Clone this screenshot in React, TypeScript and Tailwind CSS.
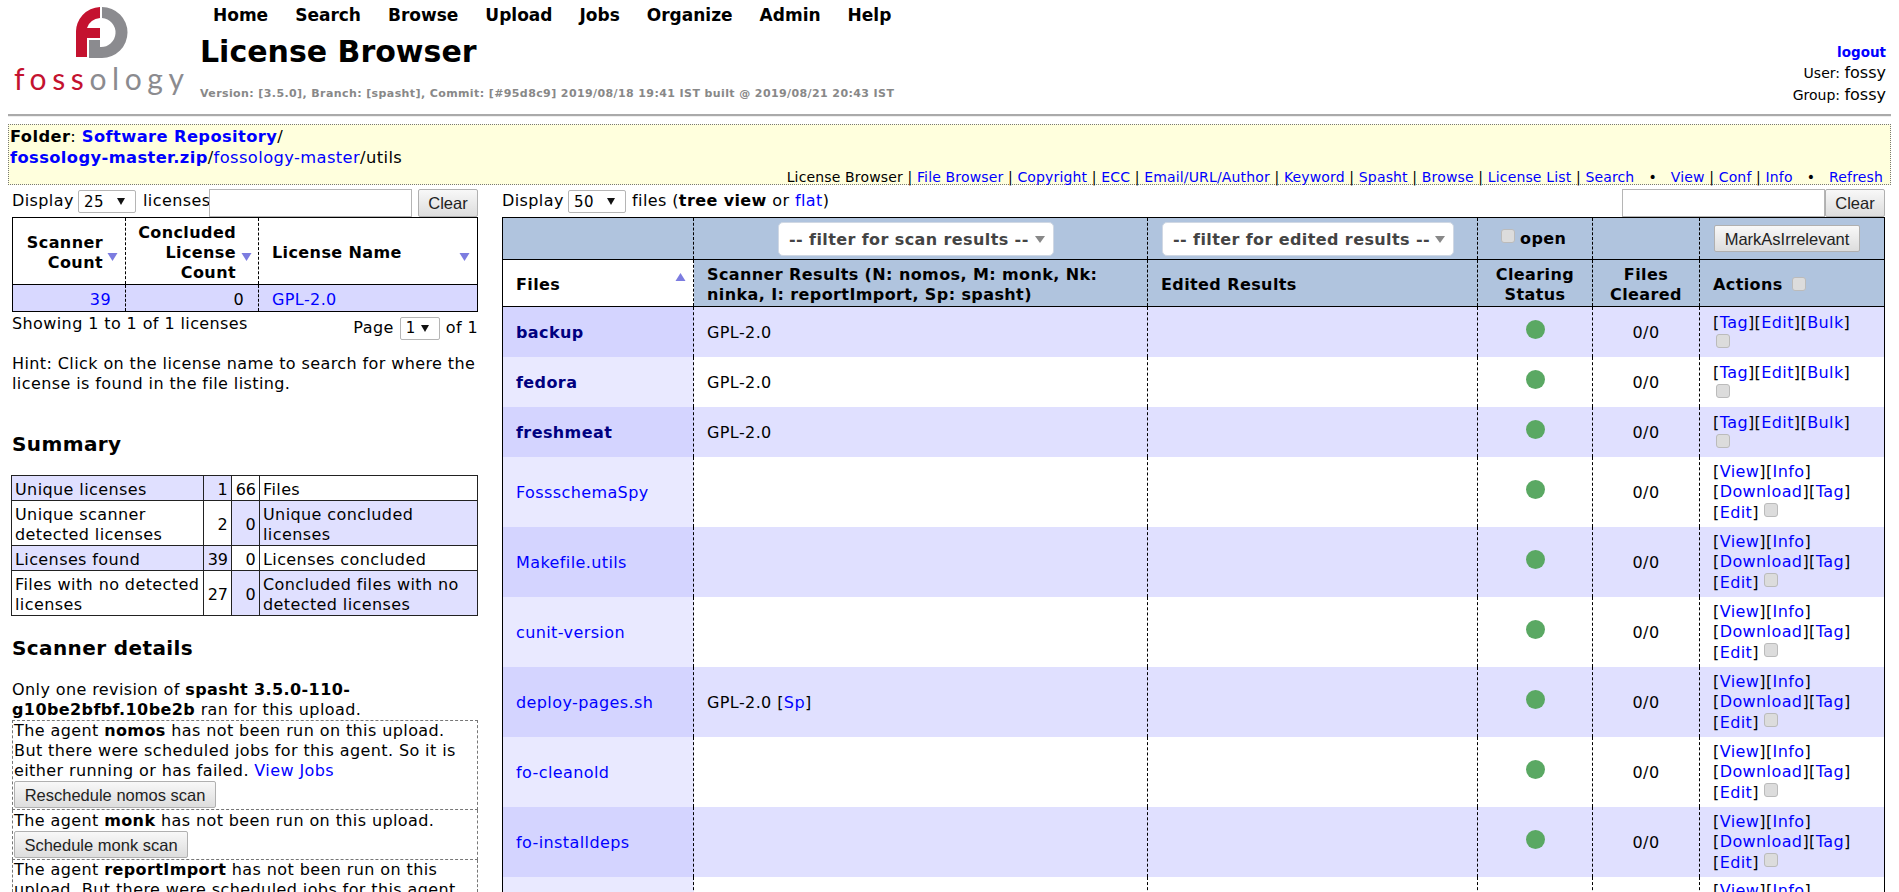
import React from "react";

const Tri = ({ up = false, className = "" }: { up?: boolean; className?: string }) => (
  <svg width="11" height="10" viewBox="0 0 11 10" className={className}>
    <path d={up ? "M5.5 1 L10.5 9 H0.5 Z" : "M0.5 1 H10.5 L5.5 9 Z"} fill="#7c7ce0" />
  </svg>
);

const Check = ({ className = "inline-block" }: { className?: string }) => (
  <input
    type="checkbox"
    className={
      "appearance-none w-[14px] h-[14px] rounded-[3px] border border-[#bbbbbb] bg-[#dcdcdc] " + className
    }
  />
);

const Sel = ({ value, w, h = "h-[23px]" }: { value: string; w: string; h?: string }) => (
  <span className={"relative inline-block " + w + " " + h}>
    <select className={"appearance-none block w-full h-full bg-white border border-[#b5b5b5] rounded-[2px] pl-[5px] text-[15px] text-black font-['DejaVu_Sans',sans-serif]"}>
      <option>{value}</option>
    </select>
    <svg width="8" height="7" viewBox="0 0 8 7" className="absolute right-[11px] top-[8px] pointer-events-none">
      <path d="M0 0 H8 L4 7 Z" fill="#111" />
    </svg>
  </span>
);

const Btn = ({ children, className = "" }: { children: React.ReactNode; className?: string }) => (
  <button
    className={
      "bg-gradient-to-b from-[#f8f8f8] to-[#dddddd] border border-[#b0b0b0] rounded-[2px] font-['Liberation_Sans',sans-serif] tracking-normal text-[16.5px] leading-[18px] text-[#222] " +
      className
    }
  >
    {children}
  </button>
);

const L = ({ children, className = "" }: { children: React.ReactNode; className?: string }) => (
  <a href="#" className={"text-[#0000ff] " + className}>
    {children}
  </a>
);

const Acts = ({ items }: { items: string[] }) => (
  <>
    {items.map((t) => (
      <React.Fragment key={t}>
        [<L>{t}</L>]<wbr />
      </React.Fragment>
    ))}
  </>
);

const Chosen = ({ label, w }: { label: string; w: string }) => (
  <div className={"relative h-[34px] bg-white rounded-[5px] border border-[#d0d8e4] pl-[10px] font-bold text-[#444] leading-[34px] whitespace-nowrap " + w}>
    {label}
    <svg width="10" height="7" viewBox="0 0 10 7" className="absolute right-[8px] top-[13px]">
      <path d="M0 0 H10 L5 7 Z" fill="#888" />
    </svg>
  </div>
);

const Logo = () => (
  <div className="w-[200px] shrink-0 pl-[14px] pt-[7px]">
    <svg width="70" height="52" viewBox="0 0 70 52" className="ml-[62px] block">
      <g transform="translate(-77 -7)">
        <path d="M77 57 V33 A25 25 0 0 1 101 7 V18 A15 15 0 0 0 88 28 H101 V38 H88 V57 Z" fill="#c4122f" />
        <path d="M103 7 A25.5 25.5 0 1 1 103 58 H90 V40 H101 V47 A14.5 14.5 0 0 0 103 18 Z" fill="#8b8b8f" />
      </g>
    </svg>
    <div className="mt-[1px] font-['Lato',sans-serif] text-[30px] leading-[36px] tracking-[5.6px] whitespace-nowrap">
      <span className="text-[#c4122f]">foss</span>
      <span className="text-[#8b8b8f]">ology</span>
    </div>
  </div>
);

type Row = { name: string; dir?: boolean; scan?: string; sp?: boolean };
const rows: Row[] = [
  { name: "backup", dir: true, scan: "GPL-2.0" },
  { name: "fedora", dir: true, scan: "GPL-2.0" },
  { name: "freshmeat", dir: true, scan: "GPL-2.0" },
  { name: "FossschemaSpy" },
  { name: "Makefile.utils" },
  { name: "cunit-version" },
  { name: "deploy-pages.sh", scan: "GPL-2.0", sp: true },
  { name: "fo-cleanold" },
  { name: "fo-installdeps" },
  { name: "fo-postinstall" },
];

const dash = "border-r border-dashed border-black";

export default function App() {
  return (
    <div className="h-[892px] overflow-hidden bg-white text-black text-[16px] tracking-[0.4px] leading-[20px] font-['DejaVu_Sans',sans-serif]">
      <header className="flex h-[114px]">
        <Logo />
        <div className="flex-1">
          <nav className="flex gap-[27px] pl-[13px] pt-[4px] text-[17px] tracking-normal leading-[22px] font-bold">
            {["Home", "Search", "Browse", "Upload", "Jobs", "Organize", "Admin", "Help"].map((n) => (
              <span key={n}>{n}</span>
            ))}
          </nav>
          <h1 className="mt-[8px] text-[30px] tracking-normal leading-[36px] font-bold">License Browser</h1>
          <p className="mt-[17px] text-[11px] tracking-[0.4px] leading-[14px] font-bold text-[#888]">
            Version: [3.5.0], Branch: [spasht], Commit: [#95d8c9] 2019/08/18 19:41 IST built @ 2019/08/21 20:43 IST
          </p>
        </div>
        <div className="pr-[13px] pt-[42px] text-right tracking-normal">
          <div className="font-bold text-[#0000ff] leading-[20px] text-[13.5px]">logout</div>
          <div className="leading-[22px] text-[14px]">
            User: <span className="text-[16px]">fossy</span>
          </div>
          <div className="leading-[22px] text-[14px]">
            Group: <span className="text-[16px]">fossy</span>
          </div>
        </div>
      </header>
      <hr className="mx-[8px] border-0 border-t-2 border-b border-t-[#aaaaaa] border-b-[#eeeeee]" />

      <section className="mx-[8px] mt-[7px] h-[61px] border border-dotted border-[#777] bg-[#ffffdd] pl-[1px] pt-[1px] flex flex-col">
        <div className="leading-[21px] text-[16.3px]">
          <b>Folder</b>: <L className="font-bold">Software Repository</L>/
          <br />
          <L className="font-bold">fossology-master.zip</L>/<L>fossology-master</L>/utils
        </div>
        <div className="mt-auto pr-[7px] text-right text-[14px] tracking-[0.15px] leading-[18px]">
          License Browser | <L>File Browser</L> | <L>Copyright</L> | <L>ECC</L> | <L>Email/URL/Author</L> | <L>Keyword</L> | <L>Spasht</L> | <L>Browse</L> | <L>License List</L> | <L>Search</L>
          <span className="mx-[14px]">•</span>
          <L>View</L> | <L>Conf</L> | <L>Info</L>
          <span className="mx-[14px]">•</span>
          <L>Refresh</L>
        </div>
      </section>

      <main className="flex pt-[4px]">
        <aside className="w-[466px] shrink-0 ml-[12px] mr-[24px]">
          <div className="flex items-start h-[28px] w-[466px]">
            <span className="w-[66px] mt-[2px]">Display</span>
            <span className="mt-[1px] flex"><Sel value="25" w="w-[58px]" /></span>
            <span className="ml-[7px] w-[66px] mt-[2px]">licenses</span>
            <input className="w-[203px] h-[28px] border border-[#b5b5b5] bg-white" />
            <Btn className="ml-[6px] w-[60px] h-[28px]">Clear</Btn>
          </div>

          <table className="w-[466px] table-fixed border-collapse border border-black">
            <colgroup>
              <col className="w-[113px]" />
              <col className="w-[133px]" />
              <col />
            </colgroup>
            <thead>
              <tr className="h-[67px] border-b border-black font-bold">
                <th className={"relative text-right pt-[3px] pr-[22px] " + dash}>
                  Scanner Count
                  <Tri className="absolute right-[7px] top-[34px]" />
                </th>
                <th className={"relative text-right pt-[3px] pr-[22px] " + dash}>
                  Concluded License Count
                  <Tri className="absolute right-[6px] top-[34px]" />
                </th>
                <th className="relative text-left pt-[3px] pl-[13px]">
                  License Name
                  <Tri className="absolute right-[7px] top-[34px]" />
                </th>
              </tr>
            </thead>
            <tbody>
              <tr className="h-[27px] bg-[#d8d8ff]">
                <td className={"text-right pt-[3px] pr-[14px] " + dash}><L>39</L></td>
                <td className={"text-right pt-[3px] pr-[14px] " + dash}>0</td>
                <td className="pt-[3px] pl-[13px]"><L>GPL-2.0</L></td>
              </tr>
            </tbody>
          </table>

          <div className="flex justify-between w-[466px]">
            <span className="leading-[24px]">Showing 1 to 1 of 1 licenses</span>
            <span className="flex items-center mt-[4px] h-[24px]">
              Page<span className="ml-[6px] flex"><Sel value="1" w="w-[40px]" /></span><span className="ml-[6px]">of 1</span>
            </span>
          </div>

          <p className="mt-[14px] w-[466px]">
            Hint: Click on the license name to search for where the license is found in the file listing.
          </p>

          <h2 className="mt-[37px] text-[20px] leading-[26px] font-bold">Summary</h2>

          <table className="-ml-[1px] mt-[18px] w-[467px] table-fixed border-collapse border border-[#222]">
            <colgroup>
              <col className="w-[192px]" />
              <col className="w-[28px]" />
              <col className="w-[28px]" />
              <col />
            </colgroup>
            <tbody className="[&_td]:border [&_td]:border-[#222] [&_td]:px-[3px] [&_td]:pt-[3px]">
              <tr className="h-[25px]">
                <td className="bg-[#e0e0ff]">Unique licenses</td>
                <td className="text-right bg-[#e0e0ff]">1</td>
                <td className="text-right !tracking-normal">66</td>
                <td>Files</td>
              </tr>
              <tr className="h-[45px]">
                <td>Unique scanner detected licenses</td>
                <td className="text-right">2</td>
                <td className="text-right bg-[#e0e0ff]">0</td>
                <td className="bg-[#e0e0ff]">Unique concluded licenses</td>
              </tr>
              <tr className="h-[25px]">
                <td className="bg-[#e0e0ff]">Licenses found</td>
                <td className="text-right !tracking-normal bg-[#e0e0ff]">39</td>
                <td className="text-right">0</td>
                <td>Licenses concluded</td>
              </tr>
              <tr className="h-[45px]">
                <td>Files with no detected licenses</td>
                <td className="text-right !tracking-normal">27</td>
                <td className="text-right bg-[#e0e0ff]">0</td>
                <td className="bg-[#e0e0ff]">Concluded files with no detected licenses</td>
              </tr>
            </tbody>
          </table>

          <h2 className="mt-[19px] text-[20px] leading-[26px] font-bold">Scanner details</h2>

          <p className="mt-[19px] w-[466px]">
            Only one revision of <b>spasht 3.5.0-110-g10be2bfbf.10be2b</b> ran for this upload.
          </p>

          <div className="w-[466px]">
            <div className="border border-dashed border-[#777] pl-[1px] pb-[1px]">
              The agent <b>nomos</b> has not been run on this upload. But there were scheduled jobs for this agent. So it is either running or has failed. <L>View Jobs</L>
              <br />
              <Btn className="w-[202px] h-[27px] block">Reschedule nomos scan</Btn>
            </div>
            <div className="border border-dashed border-t-0 border-[#777] pl-[1px] pb-[1px] pt-[1px]">
              The agent <b>monk</b> has not been run on this upload.
              <br />
              <Btn className="w-[174px] h-[27px] block">Schedule monk scan</Btn>
            </div>
            <div className="border border-dashed border-t-0 border-[#777] pl-[1px]">
              The agent <b>reportImport</b> has not been run on this upload. But there were scheduled jobs for this agent. So it is either running or has failed.
            </div>
          </div>
        </aside>

        <div className="flex-1 min-w-0">
          <div className="flex items-start h-[28px] w-[1383px]">
            <span className="w-[66px] mt-[2px]">Display</span>
            <span className="mt-[1px] flex"><Sel value="50" w="w-[58px]" /></span>
            <span className="ml-[6px] mt-[2px]">
              files (<b>tree view</b> or <L>flat</L>)
            </span>
            <input className="ml-auto w-[203px] h-[28px] border border-[#b5b5b5] bg-white" />
            <Btn className="w-[60px] h-[28px]">Clear</Btn>
          </div>

          <table className="w-[1383px] table-fixed border-collapse border border-black">
            <colgroup>
              <col className="w-[191px]" />
              <col className="w-[454px]" />
              <col className="w-[330px]" />
              <col className="w-[115px]" />
              <col className="w-[107px]" />
              <col />
            </colgroup>
            <thead className="font-bold">
              <tr className="h-[42px] bg-[#b0c4de] border-b border-black">
                <td className={dash}></td>
                <td className={"pl-[84px] " + dash}><Chosen label="-- filter for scan results --" w="w-[276px]" /></td>
                <td className={"pl-[14px] " + dash}><Chosen label="-- filter for edited results --" w="w-[292px]" /></td>
                <td className={"pl-[23px] " + dash}>
                  <span className="flex items-center gap-[5px]"><Check className="inline-block -mt-[5px]" />open</span>
                </td>
                <td className={dash}></td>
                <td className="pl-[14px]">
                  <Btn className="w-[146px] h-[27px] font-normal">MarkAsIrrelevant</Btn>
                </td>
              </tr>
              <tr className="h-[47px] bg-[#b0c4de] border-b border-black">
                <th className={"relative bg-white text-left pt-[3px] pl-[13px] " + dash}>
                  Files
                  <Tri up className="absolute right-[7px] top-[12px]" />
                </th>
                <th className={"text-left pt-[3px] pl-[13px] pr-[30px] " + dash}>
                  Scanner Results (N: nomos, M: monk, Nk: ninka, I: reportImport, Sp: spasht)
                </th>
                <th className={"text-left pt-[3px] pl-[13px] " + dash}>Edited Results</th>
                <th className={"text-center pt-[3px] " + dash}>Clearing Status</th>
                <th className={"text-center pt-[3px] " + dash}>Files Cleared</th>
                <th className="text-left pt-[3px] pl-[13px]">
                  Actions <Check className="inline-block ml-[3px] -mt-[3px] align-middle" />
                </th>
              </tr>
            </thead>
            <tbody>
              {rows.map((r, i) => {
                const odd = i % 2 === 0;
                return (
                  <tr key={r.name} className={(r.dir ? "h-[50px] " : "h-[70px] ") + (odd ? "bg-[#e0e0ff]" : "bg-white")}>
                    <td className={"pt-[3px] pl-[13px] " + dash + " " + (odd ? "bg-[#d4d4ff]" : "bg-[#e9e9ff]")}>
                      {r.dir ? <a href="#" className="font-bold text-[#000080]">{r.name}</a> : <L>{r.name}</L>}
                    </td>
                    <td className={"pt-[3px] pl-[13px] " + dash}>
                      {r.scan}
                      {r.sp && <> [<L>Sp</L>]</>}
                    </td>
                    <td className={dash}></td>
                    <td className={dash}>
                      <span className="block mx-auto -mt-[4px] w-[19px] h-[19px] rounded-full bg-[#5aa863]" />
                    </td>
                    <td className={"text-center " + dash}><span className="relative top-[1px]">0/0</span></td>
                    <td className="pl-[13px] pr-[2px]">
                      {r.dir ? (
                        <div className="-mt-[3px]">
                          <Acts items={["Tag", "Edit", "Bulk"]} />
                          <Check className="block ml-[3px] mt-[1px]" />
                        </div>
                      ) : (
                        <div>
                          <Acts items={["View", "Info"]} />
                          <br />
                          <Acts items={["Download", "Tag"]} />
                          <br />
                          <span className="relative top-[1px]"><Acts items={["Edit"]} /></span>{" "}
                          <Check className="inline-block align-middle -mt-[4px]" />
                        </div>
                      )}
                    </td>
                  </tr>
                );
              })}
            </tbody>
          </table>
        </div>
      </main>
    </div>
  );
}
